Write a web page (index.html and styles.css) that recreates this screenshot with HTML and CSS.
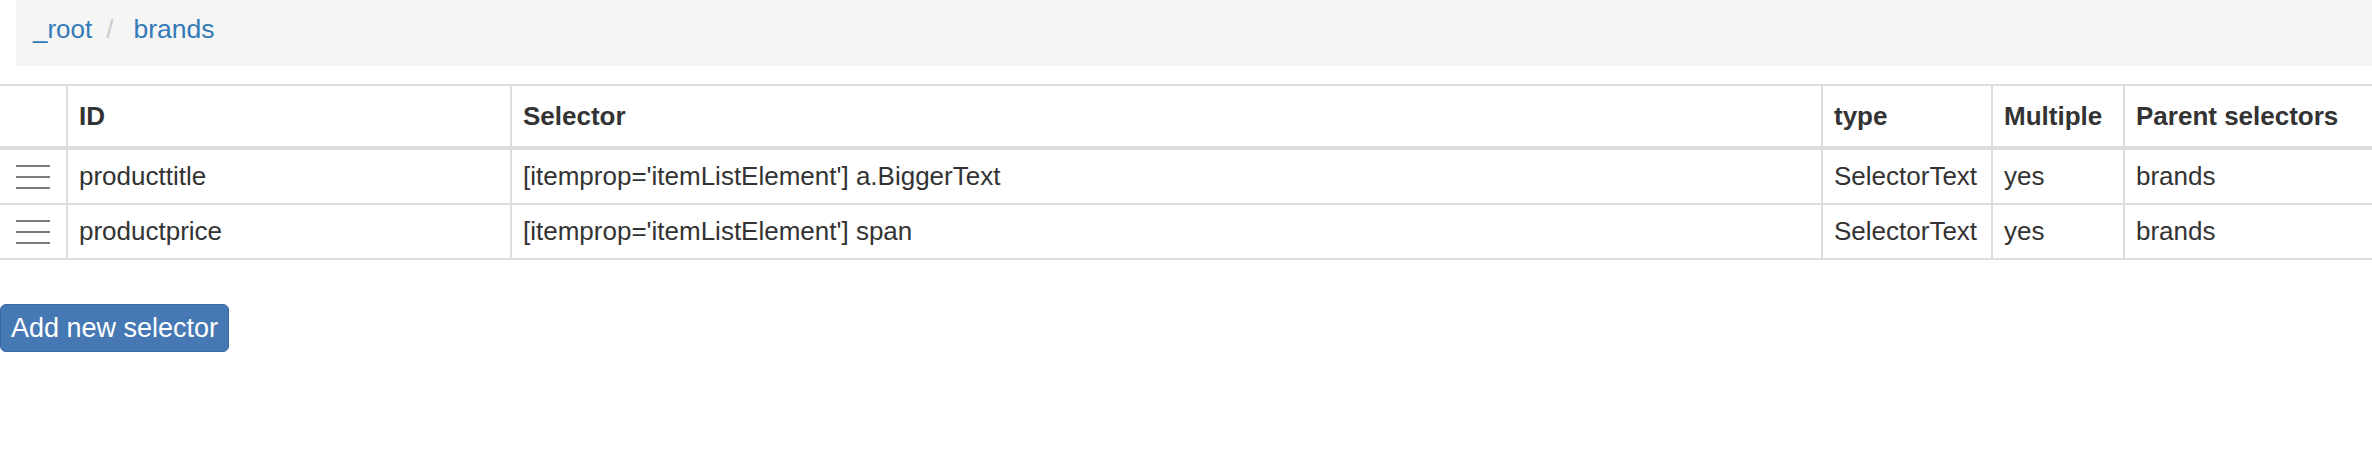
FILE: index.html
```html
<!DOCTYPE html>
<html>
<head>
<meta charset="utf-8">
<link rel="stylesheet" href="styles.css">
</head>
<body>
<div class="page">
  <nav class="breadcrumb">
    <a class="crumb" href="#">_root</a>
    <span class="sep">/</span>
    <a class="crumb" href="#">brands</a>
  </nav>

  <div class="table" role="table">
    <div class="row head" role="row">
      <div class="cell handle-col"></div>
      <div class="cell th">ID</div>
      <div class="cell th">Selector</div>
      <div class="cell th">type</div>
      <div class="cell th">Multiple</div>
      <div class="cell th">Parent selectors</div>
    </div>
    <div class="row body" role="row">
      <div class="cell handle-col"><span class="handle"><i></i><i></i><i></i></span></div>
      <div class="cell">producttitle</div>
      <div class="cell">[itemprop='itemListElement'] a.BiggerText</div>
      <div class="cell">SelectorText</div>
      <div class="cell">yes</div>
      <div class="cell">brands</div>
    </div>
    <div class="row body" role="row">
      <div class="cell handle-col"><span class="handle"><i></i><i></i><i></i></span></div>
      <div class="cell">productprice</div>
      <div class="cell">[itemprop='itemListElement'] span</div>
      <div class="cell">SelectorText</div>
      <div class="cell">yes</div>
      <div class="cell">brands</div>
    </div>
  </div>

  <button class="btn-primary" type="button">Add new selector</button>
</div>
</body>
</html>
```

FILE: styles.css
```css
* { box-sizing: border-box; }

html, body {
  margin: 0;
  padding: 0;
  background: #ffffff;
}

body {
  font-family: "Liberation Sans", Arial, Helvetica, sans-serif;
  font-size: 26px;
  line-height: 37px;
  color: #333333;
}

.page {
  display: flex;
  flex-direction: column;
  align-items: flex-start;
}

.breadcrumb {
  align-self: stretch;
  margin-left: 16px;
  height: 66px;
  padding: 11px 17px 18px;
  background: #f5f5f5;
  display: flex;
  align-items: baseline;
}

.crumb {
  color: #337ab7;
  text-decoration: none;
}

.crumb + .sep + .crumb {
  font-size: 26.5px;
}

.sep {
  color: #cccccc;
  margin: 0 20px 0 14px;
}

.table {
  align-self: stretch;
  margin-top: 18px;
  border-top: 2px solid #dddddd;
}

.row {
  display: grid;
  grid-template-columns: 66px 444px 1311px 170px 132px 1fr;
}

.row.head {
  border-bottom: 4px solid #dddddd;
}

.row.body {
  border-bottom: 2px solid #dddddd;
}

.cell {
  padding: 8px 11px;
  border-left: 2px solid #dddddd;
  white-space: nowrap;
  overflow: hidden;
}

.cell.handle-col {
  border-left: 0;
  padding: 0;
  display: flex;
  align-items: center;
  justify-content: center;
}

.head .cell {
  padding-top: 12px;
  padding-bottom: 11px;
}

.head .cell.handle-col {
  padding: 0;
}

.th {
  font-weight: bold;
}

.handle {
  width: 34px;
  height: 24px;
  display: flex;
  flex-direction: column;
  justify-content: space-between;
}

.handle i {
  display: block;
  height: 2px;
  background: #7a7a7a;
}

.btn-primary {
  margin-top: 44px;
  font-family: "Liberation Sans", Arial, Helvetica, sans-serif;
  font-size: 27px;
  line-height: 36px;
  padding: 5px 10px;
  color: #ffffff;
  background: #4679b3;
  border: 1px solid #3a69a0;
  border-radius: 6px;
  cursor: pointer;
}
```
